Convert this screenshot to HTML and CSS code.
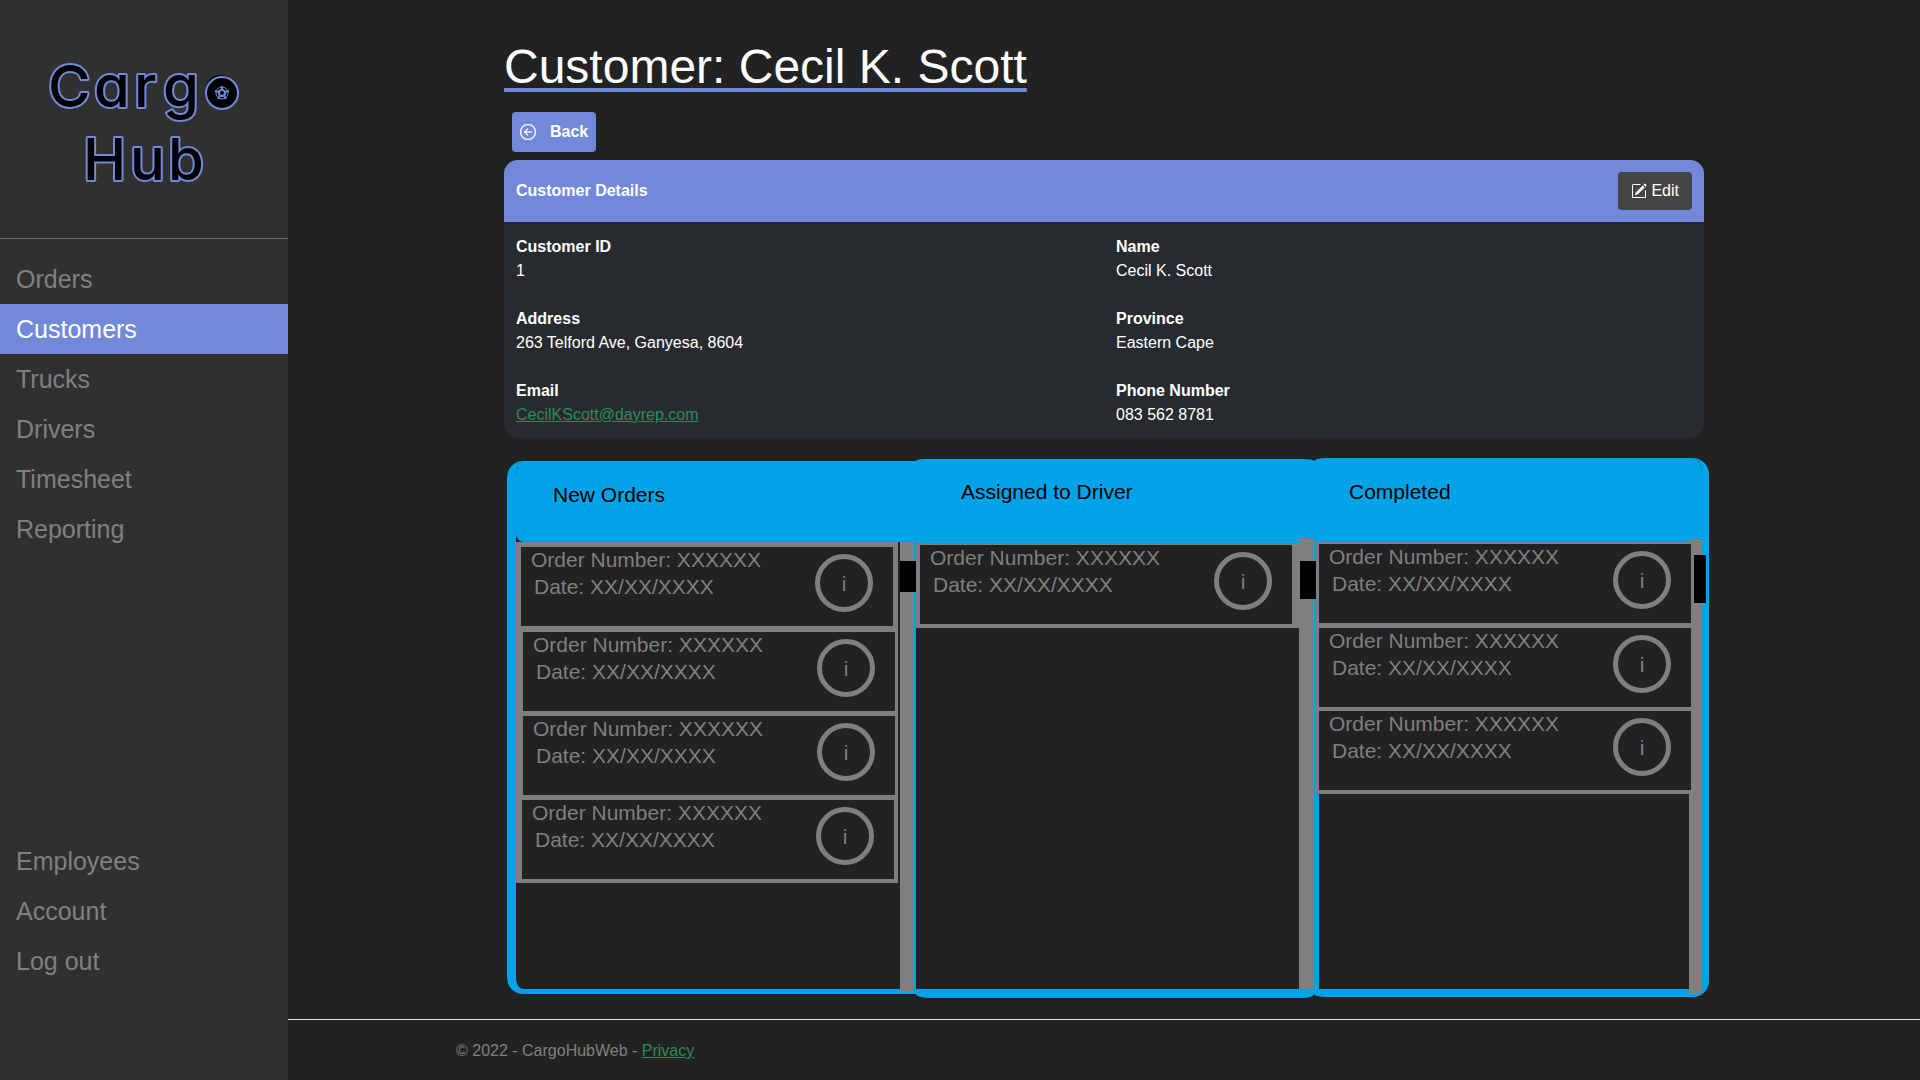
FILE: index.html
```html
<!DOCTYPE html>
<html lang="en">
<head>
<meta charset="utf-8">
<meta name="viewport" content="width=device-width, initial-scale=1">
<title>Customer: Cecil K. Scott - CargoHubWeb</title>
<link rel="stylesheet" href="styles.css">
</head>
<body>
<aside class="sidebar">
  <a class="brand" href="#">
    <svg class="logo" viewBox="0 0 288 238" role="img" aria-label="Cargo Hub">
      <g class="logo-text">
        <text x="48 94 134 163 203" y="107">Carg<tspan class="logo-wheel">o</tspan></text>
        <text x="83 130 168" y="180">Hub</text>
      </g>
      <circle cx="222" cy="93" r="16" fill="#000" stroke="#7289da" stroke-width="2"/>
      <g fill="none" stroke="#7289da">
        <circle cx="222" cy="93" r="6"/>
        <circle cx="222" cy="93" r="3" stroke-width="2"/>
        <path stroke-width="2" d="M222 90v-4M225 92l4-1M224 96l2 3M220 96l-2 3M219 92l-4-1"/>
      </g>
    </svg>
  </a>
  <nav class="nav">
    <a href="#">Orders</a>
    <a class="active" href="#" aria-current="page">Customers</a>
    <a href="#">Trucks</a>
    <a href="#">Drivers</a>
    <a href="#">Timesheet</a>
    <a href="#">Reporting</a>
  </nav>
  <nav class="nav nav-bottom">
    <a href="#">Employees</a>
    <a href="#">Account</a>
    <a href="#">Log out</a>
  </nav>
</aside>

<div class="page">
  <main class="content">
    <h1 class="title">Customer: Cecil K. Scott</h1>
    <button class="btn back" type="button">
      <svg class="icon" viewBox="0 0 16 16" aria-hidden="true"><path fill="currentColor" stroke="currentColor" stroke-width=".4" fill-rule="evenodd" d="M1 8a7 7 0 1 0 14 0A7 7 0 0 0 1 8zm15 0A8 8 0 1 1 0 8a8 8 0 0 1 16 0zm-4.500-.5a.5.5 0 0 1 0 1H5.707l2.147 2.146a.5.5 0 0 1-.708.708l-3-3a.5.5 0 0 1 0-.708l3-3a.5.5 0 1 1 .708.708L5.707 7.500H11.500z"/></svg>
      Back
    </button>

    <section class="details">
      <header class="details-head">
        <h2>Customer Details</h2>
        <button class="btn edit" type="button">
          <svg class="icon" viewBox="0 0 16 16" aria-hidden="true"><path fill="currentColor" d="M15.502 1.940a.5.5 0 0 1 0 .706L14.459 3.690l-2-2L13.502.646a.5.5 0 0 1 .707 0l1.293 1.293zm-1.750 2.456-2-2L4.939 9.210a.5.5 0 0 0-.121.196l-.805 2.414a.25.25 0 0 0 .316.316l2.414-.805a.5.5 0 0 0 .196-.120l6.813-6.814z"/><path fill="currentColor" fill-rule="evenodd" d="M1 13.500A1.500 1.500 0 0 0 2.500 15h11a1.500 1.500 0 0 0 1.500-1.500v-6a.5.5 0 0 0-1 0v6a.5.5 0 0 1-.5.5h-11a.5.5 0 0 1-.5-.5v-11a.5.5 0 0 1 .5-.5H9a.5.5 0 0 0 0-1H2.500A1.500 1.500 0 0 0 1 2.500v11z"/></svg>
          Edit
        </button>
      </header>
      <dl class="fields">
        <div><dt>Customer ID</dt><dd>1</dd></div>
        <div><dt>Name</dt><dd>Cecil K. Scott</dd></div>
        <div><dt>Address</dt><dd>263 Telford Ave, Ganyesa, 8604</dd></div>
        <div><dt>Province</dt><dd>Eastern Cape</dd></div>
        <div><dt>Email</dt><dd><a href="mailto:CecilKScott@dayrep.com">CecilKScott@dayrep.com</a></dd></div>
        <div><dt>Phone Number</dt><dd>083 562 8781</dd></div>
      </dl>
    </section>

    <div class="board">
      <section class="column new">
        <h3>New Orders</h3>
        <div class="lane">
          <ul class="orders">
            <li class="order"><p>Order Number: XXXXXX</p><p class="date">Date: XX/XX/XXXX</p><button class="info" type="button">i</button></li>
            <li class="order"><p>Order Number: XXXXXX</p><p class="date">Date: XX/XX/XXXX</p><button class="info" type="button">i</button></li>
            <li class="order"><p>Order Number: XXXXXX</p><p class="date">Date: XX/XX/XXXX</p><button class="info" type="button">i</button></li>
            <li class="order"><p>Order Number: XXXXXX</p><p class="date">Date: XX/XX/XXXX</p><button class="info" type="button">i</button></li>
          </ul>
          <div class="track"><div class="thumb"></div></div>
        </div>
      </section>
      <section class="column assigned">
        <h3>Assigned to Driver</h3>
        <div class="lane">
          <ul class="orders">
            <li class="order"><p>Order Number: XXXXXX</p><p class="date">Date: XX/XX/XXXX</p><button class="info" type="button">i</button></li>
          </ul>
          <div class="track"><div class="thumb"></div></div>
        </div>
      </section>
      <section class="column completed">
        <h3>Completed</h3>
        <div class="lane">
          <ul class="orders">
            <li class="order"><p>Order Number: XXXXXX</p><p class="date">Date: XX/XX/XXXX</p><button class="info" type="button">i</button></li>
            <li class="order"><p>Order Number: XXXXXX</p><p class="date">Date: XX/XX/XXXX</p><button class="info" type="button">i</button></li>
            <li class="order"><p>Order Number: XXXXXX</p><p class="date">Date: XX/XX/XXXX</p><button class="info" type="button">i</button></li>
          </ul>
          <div class="track"><div class="thumb"></div></div>
        </div>
      </section>
    </div>
  </main>
  <footer class="footer">
    <div class="footer-inner">© 2022 - CargoHubWeb - <a href="#">Privacy</a></div>
  </footer>
</div>
</body>
</html>
```
FILE: styles.css
```css
:root {
  --bg: #222222;
  --accent: #7289da;
  --board: #00a2e8;
  --grey: #7f7f7f;
  --link: #2e8b57;
}

* { box-sizing: border-box; }

body {
  margin: 0;
  min-height: 100vh;
  display: grid;
  grid-template-columns: 288px minmax(0, 1fr);
  background: var(--bg);
  color: #fff;
  font: 16px/24px "Liberation Sans", Arial, sans-serif;
}

h1, h2, h3, p, ul, dl, dd { margin: 0; padding: 0; }
button { font: inherit; color: inherit; cursor: pointer; }
a { color: var(--link); }

/* Sidebar */
.sidebar {
  display: flex;
  flex-direction: column;
  background: #303030;
  padding-bottom: 94px;
}
.brand {
  display: block;
  border-bottom: 1px solid #666;
}
.logo { display: block; width: 100%; }
.logo-text {
  font: 500 58px Inter, "Liberation Sans", sans-serif;
  font-feature-settings: "cv11";
  fill: #000;
  stroke: var(--accent);
  stroke-width: 4px;
  stroke-linejoin: round;
  paint-order: stroke;
}
.logo-wheel { stroke: none; }
.nav {
  display: flex;
  flex-direction: column;
  padding-top: 15px;
}
.nav a {
  padding: 8px 16px;
  color: #808080;
  font-size: 25px;
  line-height: 34px;
  text-decoration: none;
}
.nav a.active { background: var(--accent); color: #fff; }
.nav-bottom { margin-top: auto; }

/* Page */
.page {
  display: flex;
  flex-direction: column;
  min-width: 0;
}
.content {
  flex: 1;
  width: 100%;
  max-width: 1200px;
  margin: 0 auto;
  padding-top: 39px;
}
.title {
  font-size: 48px;
  font-weight: 400;
  line-height: 56px;
  text-decoration: underline 4px var(--accent);
  text-underline-offset: 5px;
}
.btn {
  display: inline-flex;
  align-items: center;
  border: 0;
  border-radius: 4px;
}
.icon { width: 16px; height: 16px; }
.back {
  height: 40px;
  margin: 17px 8px 8px;
  padding: 0 8px;
  gap: 14px;
  background: var(--accent);
  font-weight: 700;
}
.details {
  border-radius: 14px;
  overflow: hidden;
  background: #272b30;
}
.details-head {
  display: flex;
  align-items: center;
  justify-content: space-between;
  padding: 12px;
  background: var(--accent);
}
.details-head h2 { font-size: 16px; line-height: 26px; }
.edit {
  height: 38px;
  padding: 0 13px;
  gap: 4px;
  background: #444;
}
.fields {
  display: grid;
  grid-template-columns: 1fr 1fr;
  row-gap: 24px;
  padding: 13px 0 11px;
}
.fields > div { padding: 0 12px; }
.fields dt { font-weight: 700; }

/* Order board */
.board {
  display: grid;
  grid-template-columns: 409fr 398fr 395fr;
  min-height: 540px;
  margin: 20px -5px 21px 3px;
}
.column {
  display: flex;
  flex-direction: column;
  border: 0 solid var(--board);
}
.column h3 {
  height: 84px;
  background: var(--board);
  color: #000;
  font-size: 21px;
  font-weight: 400;
  line-height: 68px;
}
.new {
  margin: 3px 0 4px;
  border-width: 0 2px 5px 9px;
  border-radius: 16px 0 0 16px;
}
.new h3 {
  height: 81px;
  padding-left: 37px;
  border-radius: 7px 0 0 8px / 16px 0 0 8px;
}
.assigned {
  margin-top: 1px;
  border-bottom-width: 9px;
  border-radius: 9px 11px 12px 14px / 2px 2px 4px 4px;
}
.assigned h3 {
  padding-left: 45px;
  border-radius: 9px 11px 0 0 / 2px 2px 0 0;
  line-height: 66px;
}
.completed {
  margin-bottom: 1px;
  border-width: 0 7px 8px 5px;
  border-radius: 12px 16px 16px 12px / 3px 16px 16px 3px;
}
.completed h3 {
  padding-left: 30px;
  border-radius: 7px 9px 0 0 / 2px 16px 0 0;
}
.lane {
  flex: 1;
  display: flex;
}
.orders {
  flex: 1;
  list-style: none;
}
.order {
  display: grid;
  grid-template-columns: 1fr 58px;
  grid-template-rows: 27px 27px 25px;
  padding: 0 20px 0 10px;
  background: var(--bg);
  border: 0 solid var(--grey);
  color: var(--grey);
  font-size: 21px;
  line-height: 25px;
}
.order p { grid-column: 1; }
.order .date { padding-left: 3px; }
.info {
  grid-column: 2;
  grid-row: 1 / -1;
  width: 58px;
  height: 58px;
  margin-top: 7px;
  padding: 0;
  border: 5px solid var(--grey);
  border-radius: 50%;
  background: none;
}
.track { background: var(--grey); }
.thumb { position: relative; z-index: 3; background: #000; }

.new .order { border-width: 0 3px 5px 7px; margin-right: 2px; }
.new .order:first-child { border-width: 5px 5px 6px 5px; }
.new .order:last-child { border-width: 0 4px 4px 6px; }
.new .track { width: 14px; margin-bottom: -3px; }
.new .thumb { width: 16px; height: 31px; margin-top: 19px; }

.assigned .order { border-width: 2px 7px 4px 4px; }
.assigned .track { width: 15px; margin-top: -5px; }
.assigned .thumb { width: 16px; height: 38px; margin: 23px 0 0 1px; }

.completed .orders { position: relative; z-index: 1; }
.completed .order { border-width: 0 3px 5px 3px; margin: 0 -5px 0 -3px; }
.completed .order:first-child { border-top-width: 2px; }
.completed .order:nth-child(2) { border-bottom-width: 4px; }
.completed .order:last-child { border-bottom-width: 4px; }
.completed .track { width: 13px; margin: -3px 0 -4px; }
.completed .thumb { width: 12px; height: 48px; margin: 16px 0 0 5px; }

/* Footer */
.footer { border-top: 1px solid #dee2e6; }
.footer-inner {
  width: 100%;
  max-width: 1296px;
  margin: 0 auto;
  padding-top: 2px;
  color: #808080;
  line-height: 58px;
}
```
